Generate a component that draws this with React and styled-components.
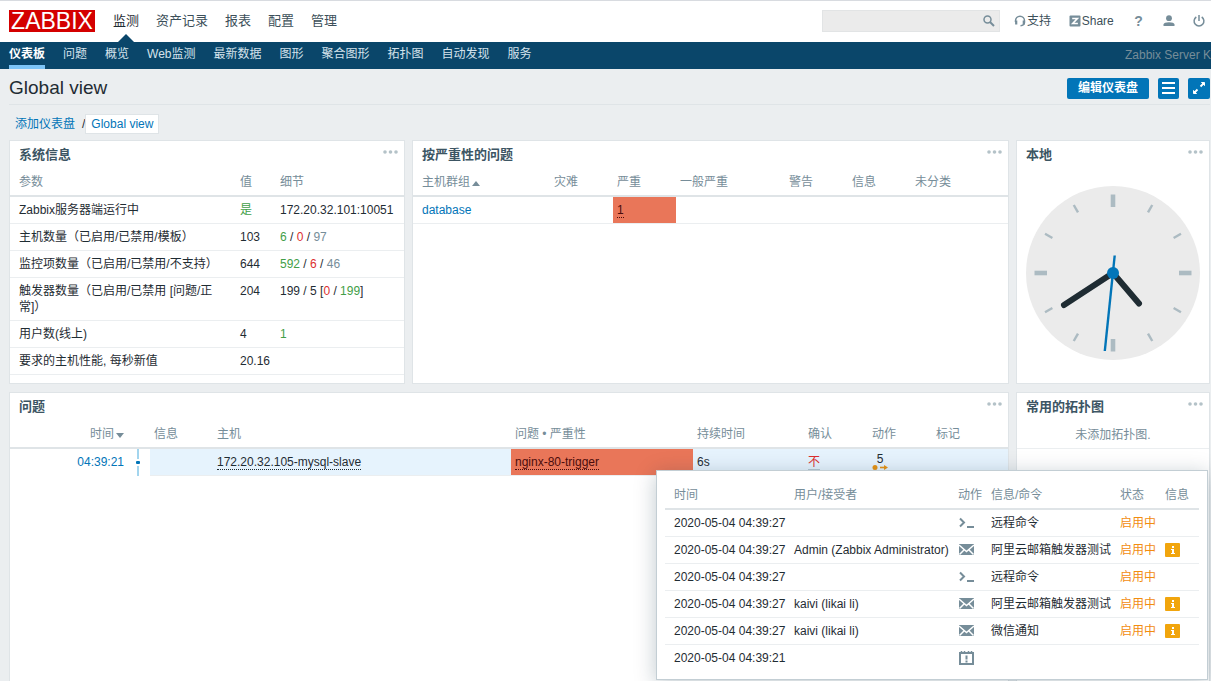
import React from "react"
import styled, { createGlobalStyle, css } from "styled-components"

const mainMenu = ["监测", "资产记录", "报表", "配置", "管理"]
const subMenu = ["仪表板", "问题", "概览", "Web监测", "最新数据", "图形", "聚合图形", "拓扑图", "自动发现", "服务"]

const history = [
  { time: "2020-05-04 04:39:27", user: "", icon: "command", message: "远程命令", status: "启用中" },
  { time: "2020-05-04 04:39:27", user: "Admin (Zabbix Administrator)", icon: "mail", message: "阿里云邮箱触发器测试", status: "启用中", info: true },
  { time: "2020-05-04 04:39:27", user: "", icon: "command", message: "远程命令", status: "启用中" },
  { time: "2020-05-04 04:39:27", user: "kaivi (likai li)", icon: "mail", message: "阿里云邮箱触发器测试", status: "启用中", info: true },
  { time: "2020-05-04 04:39:27", user: "kaivi (likai li)", icon: "mail", message: "微信通知", status: "启用中", info: true },
  { time: "2020-05-04 04:39:21", user: "", icon: "event", message: "", status: "" },
]

const HistoryIcon = ({ type }) => {
  if (type === "command") {
    return (
      <Icon width="17" height="16" viewBox="0 0 17 16" fill="none" stroke="#768d99" strokeWidth="2">
        <path d="M2 3.5l4 4-4 4M9 12h7" />
      </Icon>
    )
  }
  if (type === "mail") {
    return (
      <Icon width="17" height="16" viewBox="0 0 17 16">
        <path d="M1 2h15v11H1z" fill="#768d99" />
        <path d="M1 3l7.5 6.500L16 3M1.500 12.500l4.500-4.500M15.500 12.500l-4.500-4.500" fill="none" stroke="#fff" strokeWidth="1.500" />
      </Icon>
    )
  }
  return (
    <Icon width="17" height="16" viewBox="0 0 17 16" fill="none" stroke="#768d99">
      <path d="M2 3v11h13V3z" strokeWidth="2" />
      <path d="M3.500 1v2M6.500 1v2M10.500 1v2M13.500 1v2" strokeWidth="1.500" />
      <path d="M8.500 5.500v4M8.500 10.500v2" strokeWidth="2" />
    </Icon>
  )
}

const Dots = () => (
  <MenuButton aria-label="menu">
    <svg width="15" height="4" viewBox="0 0 15 4" fill="#b4c2c8">
      <circle cx="2" cy="2" r="1.8" />
      <circle cx="7.5" cy="2" r="1.8" />
      <circle cx="13" cy="2" r="1.8" />
    </svg>
  </MenuButton>
)

const Clock = () => (
  <ClockBox>
    <svg width="174" height="174" viewBox="-87 -87 174 174">
      <circle r="87" fill="#ebebeb" />
      {[...Array(12).keys()].map(i => (
        <line
          key={i}
          y1="-78.5"
          y2={i % 3 ? -70 : -66}
          stroke="#acbbc2"
          strokeWidth={i % 3 ? 2.4 : 4.6}
          transform={`rotate(${i * 30})`}
        />
      ))}
      <path d="M-49 32L0 0L26 30.500" fill="none" stroke="#1f2c33" strokeWidth="6" strokeLinecap="round" />
      <line x1="1.7" y1="-17.5" x2="-8.2" y2="78" stroke="#0275b8" strokeWidth="2.4" />
      <circle r="6" fill="#0275b8" />
    </svg>
  </ClockBox>
)

const Widget = ({ title, children }) => (
  <Panel>
    <PanelHead>
      <h4>{title}</h4>
      <Dots />
    </PanelHead>
    {children}
  </Panel>
)

const Columns = ({ widths }) => (
  <colgroup>
    {widths.map((w, i) => <Col key={i} $w={w} />)}
  </colgroup>
)

const SystemInfo = () => (
  <Table>
    <Columns widths={[226, 40, 0]} />
    <thead>
      <tr><Th>参数</Th><Th>值</Th><Th>细节</Th></tr>
    </thead>
    <tbody>
      <tr>
        <NameCell>Zabbix服务器端运行中</NameCell>
        <Td><Green>是</Green></Td>
        <Td>172.20.32.101:10051</Td>
      </tr>
      <tr>
        <NameCell>主机数量（已启用/已禁用/模板）</NameCell>
        <Td>103</Td>
        <Td><Green>6</Green> / <Red>0</Red> / <Grey>97</Grey></Td>
      </tr>
      <tr>
        <NameCell>监控项数量（已启用/已禁用/不支持）</NameCell>
        <Td>644</Td>
        <Td><Green>592</Green> / <Red>6</Red> / <Grey>46</Grey></Td>
      </tr>
      <tr>
        <NameCell>触发器数量（已启用/已禁用 [问题/正常]）</NameCell>
        <Td>204</Td>
        <Td>199 / 5 [<Red>0</Red> / <Green>199</Green>]</Td>
      </tr>
      <tr>
        <NameCell>用户数(线上)</NameCell>
        <Td>4</Td>
        <Td><Green>1</Green></Td>
      </tr>
      <tr>
        <NameCell>要求的主机性能, 每秒新值</NameCell>
        <Td>20.16</Td>
        <Td />
      </tr>
    </tbody>
  </Table>
)

const SeverityTable = () => (
  <Table>
    <Columns widths={[137, 63, 63, 109, 63, 63, 0]} />
    <thead>
      <tr>
        <Th>主机群组<Sort $up /></Th>
        <Th>灾难</Th>
        <Th>严重</Th>
        <Th>一般严重</Th>
        <Th>警告</Th>
        <Th>信息</Th>
        <Th>未分类</Th>
      </tr>
    </thead>
    <tbody>
      <tr>
        <Td><Link href="#database">database</Link></Td>
        <Td />
        <Td $high><Hint href="#high">1</Hint></Td>
        <Td /><Td /><Td /><Td />
      </tr>
    </tbody>
  </Table>
)

const Problems = () => (
  <Table>
    <Columns widths={[118, 22, 63, 298, 182, 111, 64, 64, 0]} />
    <thead>
      <tr>
        <Th $right>时间<Sort /></Th>
        <Th />
        <Th>信息</Th>
        <Th>主机</Th>
        <Th>问题 • 严重性</Th>
        <Th>持续时间</Th>
        <Th>确认</Th>
        <Th>动作</Th>
        <Th>标记</Th>
      </tr>
    </thead>
    <tbody>
      <tr>
        <Td $right $plain><Link href="#event">04:39:21</Link></Td>
        <TimelineCell>
          <svg width="4" height="27" viewBox="0 0 4 27">
            <path d="M1 0h2v10H1zM1 17h2v10H1z" fill="#a3d5ee" />
            <rect y="12" width="4" height="3" rx="1" fill="#0275b8" />
          </svg>
        </TimelineCell>
        <Td $active />
        <Td $active><Hint href="#host">172.20.32.105-mysql-slave</Hint></Td>
        <Td $high><Hint href="#trigger">nginx-80-trigger</Hint></Td>
        <Td $active>6s</Td>
        <Td $active><Ack href="#ack">不</Ack></Td>
        <Td $active>
          <ActionCount type="button">
            5
            <svg width="16" height="5" viewBox="0 0 16 5">
              <circle cx="3" cy="2.500" r="2.500" fill="#e79316" />
              <path d="M8 2.500h6" stroke="#e79316" strokeWidth="1.600" />
              <path d="M12 0l4 2.500-4 2.500z" fill="#e79316" />
            </svg>
          </ActionCount>
        </Td>
        <Td $active />
      </tr>
    </tbody>
  </Table>
)

const HistoryPopup = () => (
  <Popup>
    <Table>
      <Columns widths={[125, 164, 33, 129, 45, 0]} />
      <thead>
        <tr>
          <Th>时间</Th>
          <Th>用户/接受者</Th>
          <Th>动作</Th>
          <Th>信息/命令</Th>
          <Th>状态</Th>
          <Th>信息</Th>
        </tr>
      </thead>
      <tbody>
        {history.map((row, i) => (
          <tr key={i}>
            <Td $nowrap>{row.time}</Td>
            <Td $nowrap>{row.user}</Td>
            <Td><HistoryIcon type={row.icon} /></Td>
            <Td $nowrap>{row.message}</Td>
            <Td $nowrap><Orange>{row.status}</Orange></Td>
            <Td>
              {row.info && (
                <InfoButton type="button" aria-label="info">
                  <svg width="15" height="14" viewBox="0 0 15 14">
                    <path d="M7 3h2v2H7zM6 6h3v4h1v1H6v-1h1V7H6z" fill="#fff" />
                  </svg>
                </InfoButton>
              )}
            </Td>
          </tr>
        ))}
      </tbody>
    </Table>
  </Popup>
)

const App = () => (
  <Page>
    <GlobalStyle />
    <TopBar>
      <Logo href="#home">ZABBIX</Logo>
      <MainNav>
        {mainMenu.map((item, i) => (
          <MainLink key={item} href="#menu" $active={i === 0}>{item}</MainLink>
        ))}
      </MainNav>
      <Search>
        <input type="text" aria-label="search" />
        <button type="button" aria-label="search">
          <svg width="12" height="12" viewBox="0 0 12 12" fill="none" stroke="#768d99">
            <circle cx="4.500" cy="4.500" r="3.500" strokeWidth="1.500" />
            <path d="M7 7l4 4" strokeWidth="2" />
          </svg>
        </button>
      </Search>
      <Tools>
        <a href="#support">
          <svg width="12" height="12" viewBox="0 0 12 12" fill="none" stroke="#768d99">
            <path d="M1.500 7V5.800a4.300 4.300 0 0 1 9 0V7.500Q10.300 10.500 6.500 10.800" strokeWidth="1.500" />
            <path d="M2.200 5.500v4M9.800 5.500v4" strokeWidth="2.200" />
          </svg>
          支持
        </a>
        <a href="#share">
          <svg width="12" height="12" viewBox="0 0 12 12">
            <rect x="0.500" y="0.500" width="11" height="11" rx="1" fill="#768d99" />
            <path d="M3.200 3.500h5.200L3.700 8.500H8.900" fill="none" stroke="#fff" strokeWidth="1.600" />
          </svg>
          Share
        </a>
        <a href="#help"><HelpMark>?</HelpMark></a>
        <a href="#profile" aria-label="profile">
          <svg width="12" height="12" viewBox="0 0 12 12" fill="#768d99">
            <circle cx="6" cy="3.200" r="2.900" />
            <path d="M0.500 11V9.500Q1 7.300 6 7.300T11.500 9.500V11z" />
          </svg>
        </a>
        <a href="#logout" aria-label="logout">
          <svg width="12" height="12" viewBox="0 0 12 12" fill="none" stroke="#768d99" strokeWidth="1.500">
            <path d="M3.300 2A4.900 4.900 0 1 0 8.700 2M6 0v6" />
          </svg>
        </a>
      </Tools>
    </TopBar>
    <SubNav>
      {subMenu.map((item, i) => (
        <SubLink key={item} href="#submenu" $active={i === 0}>{item}</SubLink>
      ))}
      <ServerName>Zabbix Server K</ServerName>
    </SubNav>
    <Main>
      <TitleBar>
        <h1>Global view</h1>
        <EditButton type="button">编辑仪表盘</EditButton>
        <IconButton type="button" aria-label="menu">
          <svg width="13" height="12" viewBox="0 0 13 12" fill="#fff">
            <path d="M0 0h13v2H0zM0 5h13v2H0zM0 10h13v2H0z" />
          </svg>
        </IconButton>
        <IconButton type="button" aria-label="fullscreen" $wide>
          <svg width="14" height="14" viewBox="0 0 14 14" fill="#fff" stroke="#fff">
            <path d="M9.500 1.500h3V4.500zM1.500 9.500v3H4.500z" />
            <path d="M8.500 5.500l3-3M2.500 11.500l3-3" strokeWidth="1.800" />
          </svg>
        </IconButton>
      </TitleBar>
      <Breadcrumb>
        <Link href="#dashboards">添加仪表盘</Link>
        <span>/</span>
        <Current href="#global">Global view</Current>
      </Breadcrumb>
      <Dashboard>
        <Widget title="系统信息"><SystemInfo /></Widget>
        <Widget title="按严重性的问题"><SeverityTable /></Widget>
        <Widget title="本地"><Clock /></Widget>
        <Widget title="问题"><Problems /></Widget>
        <Widget title="常用的拓扑图"><Empty>未添加拓扑图.</Empty></Widget>
      </Dashboard>
    </Main>
    <HistoryPopup />
  </Page>
)

const GlobalStyle = createGlobalStyle`
  * {
    box-sizing: border-box;
  }

  body {
    margin: 0;
    background: #ebeef0;
    color: #1f2c33;
    font-family: "Liberation Sans", "Noto Sans CJK SC", sans-serif;
    font-size: 12px;
    line-height: 16px;
  }

  a {
    text-decoration: none;
  }

  button, input {
    font: inherit;
    border: 0;
    padding: 0;
    margin: 0;
  }

  button {
    cursor: pointer;
  }
`

const Page = styled.div`
  position: relative;
  display: flex;
  flex-direction: column;
  min-height: 100vh;
  overflow: hidden;
`

const TopBar = styled.header`
  display: flex;
  align-items: center;
  height: 42px;
  padding: 0 6px 2px 9px;
  background: #ffffff;
  border-top: 1px solid #d8dbe0;
`

const Logo = styled.a`
  width: 86px;
  height: 22px;
  background: #d40000;
  color: #ffffff;
  font-size: 23px;
  line-height: 22px;
  text-align: center;
`

const MainNav = styled.nav`
  display: flex;
  gap: 17px;
  margin-left: 18px;
`

const MainLink = styled.a`
  position: relative;
  color: #3c4f59;
  font-size: 13px;
  line-height: 39px;

  ${({ $active }) => $active && css`
    color: #1f2c33;

    &::after {
      content: "";
      position: absolute;
      bottom: -2px;
      left: 50%;
      margin-left: -8px;
      border: 8px solid transparent;
      border-top: 0;
      border-bottom-color: #0a466a;
    }
  `}
`

const Search = styled.div`
  display: flex;
  width: 178px;
  height: 22px;
  margin-left: auto;
  background: #ebebeb;
  border: 1px solid #e2e4e5;

  input {
    flex: 1;
    min-width: 0;
    padding: 0 4px;
    background: transparent;
  }

  button {
    display: flex;
    align-items: center;
    padding: 0 4px;
    background: transparent;
  }
`

const Tools = styled.div`
  display: flex;
  align-items: center;
  justify-content: space-between;
  width: 191px;
  margin-left: 14px;

  a {
    display: flex;
    align-items: center;
    gap: 1px;
    color: #3c4f59;
  }
`

const HelpMark = styled.span`
  width: 14px;
  color: #768d99;
  font-size: 14px;
  font-weight: bold;
  text-align: center;
`

const SubNav = styled.nav`
  display: flex;
  gap: 18px;
  height: 27px;
  padding-left: 9px;
  background: #0a466a;
  white-space: nowrap;
`

const SubLink = styled.a`
  height: 27px;
  color: #d5e3ec;
  line-height: 24px;

  ${({ $active }) => $active && css`
    color: #ffffff;
    font-weight: bold;
    border-bottom: 4px solid #7dc4f6;
  `}
`

const ServerName = styled.span`
  margin-left: auto;
  color: #768d99;
  line-height: 26px;
`

const Main = styled.main`
  display: flex;
  flex: 1;
  flex-direction: column;
  padding: 0 1px 0 9px;
`

const TitleBar = styled.div`
  display: flex;
  align-items: center;
  gap: 9px;
  height: 36px;
  padding-top: 3px;
  border-bottom: 1px solid #dfe4e7;

  h1 {
    flex: 1;
    margin: 0;
    font-size: 19px;
    font-weight: normal;
  }
`

const EditButton = styled.button`
  width: 82px;
  height: 21px;
  background: #0275b8;
  border-radius: 2px;
  color: #ffffff;
  font-weight: bold;
`

const IconButton = styled.button`
  display: flex;
  align-items: center;
  justify-content: center;
  width: ${({ $wide }) => ($wide ? "22px" : "21px")};
  height: 21px;
  background: #0275b8;
  border-radius: 2px;
`

const Link = styled.a`
  color: #0275b8;
`

const Breadcrumb = styled.div`
  display: flex;
  align-items: center;
  height: 35px;
  padding: 3px 0 0 6px;

  span {
    margin-left: 7px;
  }
`

const Current = styled.a`
  padding: 1px 5px;
  background: #ffffff;
  border: 1px solid #dfe4e7;
  color: #0275b8;
`

const Dashboard = styled.div`
  display: grid;
  flex: 1;
  grid-template-columns: 396fr 597fr 194fr;
  grid-template-rows: auto 1fr;
  gap: 8px 7px;

  section:nth-child(4) {
    grid-column: span 2;
  }

  section:nth-child(n + 4) {
    border-bottom: 0;
  }
`

const Panel = styled.section`
  min-width: 0;
  padding-bottom: 8px;
  background: #ffffff;
  border: 1px solid #dfe4e7;
`

const PanelHead = styled.div`
  display: flex;
  justify-content: space-between;
  height: 28px;
  padding: 5px 6px 0 9px;

  h4 {
    margin: 0;
    color: #3c5563;
    font-size: 13px;
    line-height: 18px;
  }
`

const MenuButton = styled.button`
  display: flex;
  align-items: center;
  height: 12px;
  background: transparent;
`

const Table = styled.table`
  width: 100%;
  border-collapse: separate;
  border-spacing: 0;
  table-layout: fixed;

  th:first-child, td:first-child {
    padding-left: 9px;
  }
`

const Col = styled.col`
  width: ${({ $w }) => ($w ? `${$w}px` : "auto")};
`

const Th = styled.th`
  padding: 5px 4px;
  border-bottom: 2px solid #dfe4e7;
  color: #768d99;
  font-weight: normal;
  text-align: ${({ $right }) => ($right ? "right" : "left")};
  white-space: nowrap;
`

const Td = styled.td`
  padding: 5px 4px;
  background: ${({ $high, $active }) => ($high ? "#e97659" : $active ? "#e6f3fd" : "transparent")};
  border-bottom: ${({ $plain }) => ($plain ? "0" : "1px solid #ebeef0")};
  color: ${({ $high }) => ($high ? "#4b0c0c" : "inherit")};
  text-align: ${({ $right }) => ($right ? "right" : "left")};
  vertical-align: top;
  white-space: ${({ $nowrap }) => ($nowrap ? "nowrap" : "normal")};
  background-clip: padding-box;
`

const NameCell = styled(Td)`
  padding-right: 18px;
`

const TimelineCell = styled.td`
  padding: 0 0 0 8px;

  svg {
    display: block;
  }
`

const Sort = styled.span`
  display: inline-block;
  margin-left: 2px;
  border: 4px solid transparent;
  border-top: ${({ $up }) => ($up ? "0" : "5px solid #768d99")};
  border-bottom: ${({ $up }) => ($up ? "5px solid #768d99" : "0")};
`

const Hint = styled.a`
  border-bottom: 1px dotted currentColor;
  color: inherit;
`

const Ack = styled.a`
  border-bottom: 1px solid #b8c8d2;
  color: #dc2f2f;
`

const ActionCount = styled.button`
  display: flex;
  flex-direction: column;
  align-items: center;
  height: 16px;
  background: transparent;
  color: inherit;
  line-height: 11px;
`

const Green = styled.span`
  color: #429e47;
`

const Red = styled.span`
  color: #dc2f2f;
`

const Grey = styled.span`
  color: #768d99;
`

const Orange = styled.span`
  color: #f28c0f;
`

const Icon = styled.svg`
  display: block;
`

const InfoButton = styled.button`
  display: block;
  width: 15px;
  height: 14px;
  margin-top: 1px;
  background: #f1a50d;
  border-radius: 1px;

  svg {
    display: block;
  }
`

const ClockBox = styled.div`
  display: flex;
  justify-content: center;
  padding-top: 17px;
`

const Empty = styled.div`
  padding: 6px 0 5px;
  border-bottom: 1px solid #ebeef0;
  color: #768d99;
  text-align: center;
`

const Popup = styled.div`
  position: absolute;
  top: 470px;
  right: 3px;
  width: 552px;
  padding: 11px 8px 8px;
  background: #ffffff;
  border: 1px solid #c3ced4;
  box-shadow: 0 4px 20px rgba(0, 40, 60, 0.25);

  tr:last-child td {
    border-bottom: 0;
  }
`

export default App
